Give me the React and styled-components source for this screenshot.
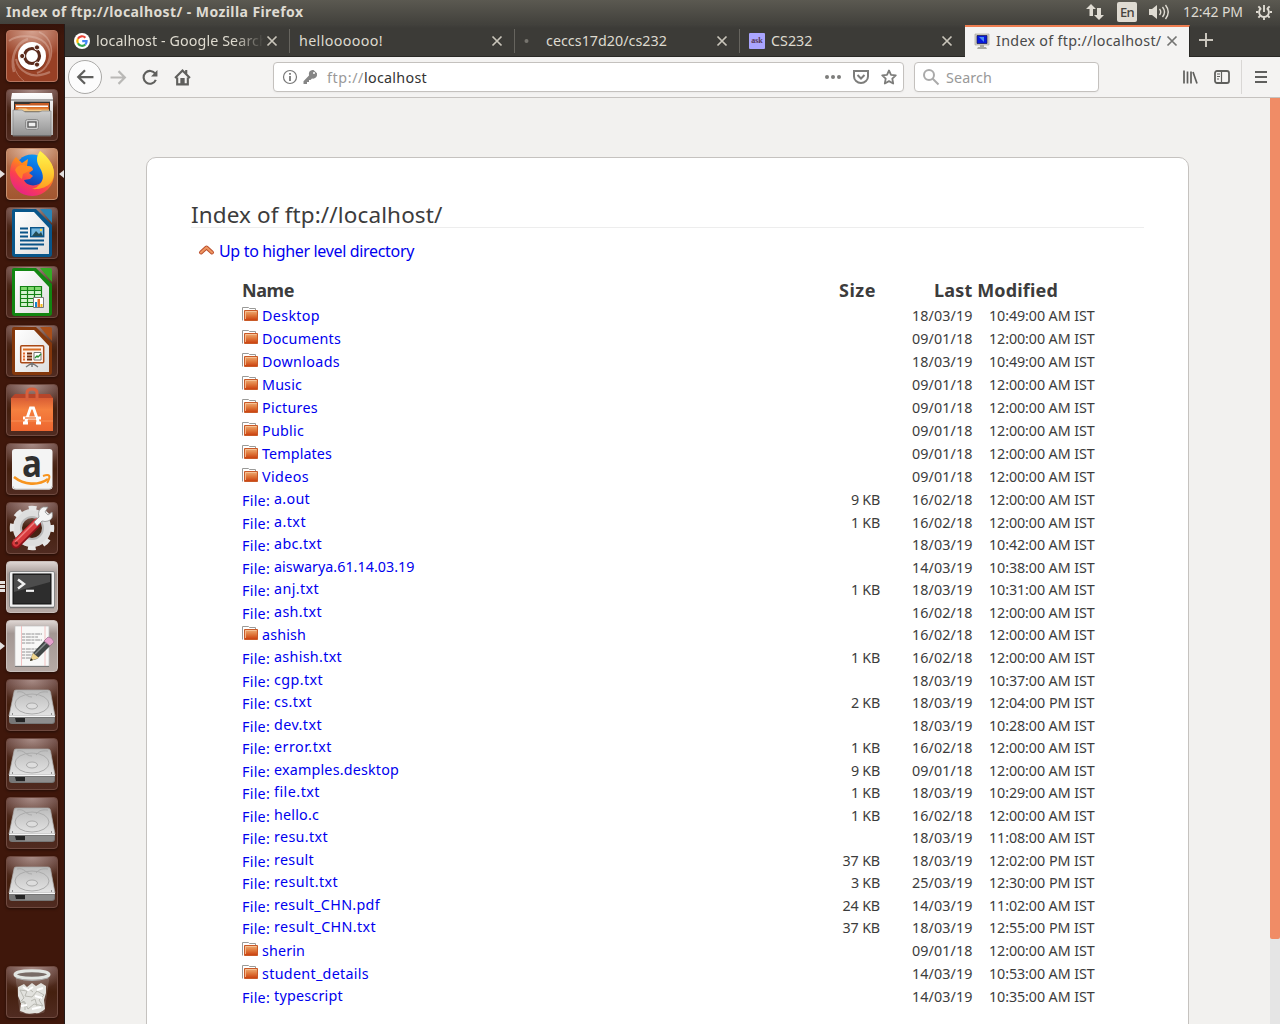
import React, { useLayoutEffect, useRef, useState } from "react";
import styled, { createGlobalStyle } from "styled-components";

const Global = createGlobalStyle`
  html, body { margin: 0; height: 1024px; overflow: hidden; }
  body { font-family: "Noto Sans", "Open Sans", sans-serif; color: #3c3c3c; background: #f2f1f0; }
  * { box-sizing: border-box; }
  svg { display: block; flex: none; overflow: visible; }
`;

const FitSpan = styled.span`
  display: inline-block;
  white-space: pre;
  flex: none;
  justify-self: start;
`;

/* Tracks text so that it fills the given advance width. */
function Fit({ w, children }) {
  const ref = useRef(null);
  const [spacing, setSpacing] = useState(0);
  useLayoutEffect(() => {
    const natural = ref.current.getBoundingClientRect().width;
    setSpacing((w - natural) / children.length);
  }, [w, children]);
  return (
    <FitSpan ref={ref} style={{ letterSpacing: spacing + "px" }}>
      {children}
    </FitSpan>
  );
}

const Desktop = styled.div`
  width: 1280px;
  height: 1024px;
  display: flex;
  flex-direction: column;
  overflow: hidden;
`;

/* ---------- top panel ---------- */
const Panel = styled.header`
  height: 24px;
  flex: none;
  display: flex;
  align-items: center;
  padding: 0 8px 0 6px;
  background: linear-gradient(#5b5951, #42413c);
  color: #dfdbd2;
  font-size: 14.5px;
  line-height: 24px;
`;
const PanelTitle = styled.div`
  flex: 1;
  font-weight: 700;
  font-size: 14px;
`;
const Indicators = styled.div`
  display: flex;
  align-items: center;
`;
const Language = styled.div`
  width: 20px;
  height: 20px;
  margin: 0 12px 0 13px;
  border-radius: 2px;
  background: #dfdbd2;
  color: #45433e;
  font-size: 13px;
  line-height: 20px;
  font-weight: 500;
  text-align: center;
  display: flex;
  justify-content: center;
`;
const Clock = styled.div`
  margin: 0 13px 0 13px;
  font-size: 14px;
`;

const Body = styled.div`
  flex: 1;
  display: flex;
  min-height: 0;
`;

/* ---------- launcher ---------- */
const Launcher = styled.nav`
  width: 65px;
  flex: none;
  display: flex;
  flex-direction: column;
  gap: 7px;
  padding: 6px 0 6px 6px;
  background: linear-gradient(#35130a, #3f170b 12px, #3f170b);
  border-right: 1px solid #241b1a;
`;
const Tile = styled.div`
  position: relative;
  width: 52px;
  height: 52px;
  flex: none;
  border-radius: 4px;
  border: 1px solid ${(p) => p.$edge || "#6f4a40"};
  background: ${(p) => p.$bg || "radial-gradient(ellipse 34px 24px at 50% 0, rgba(235,215,210,.5), transparent), linear-gradient(#64403a, #45200f 50%, #502b21)"};
  box-shadow: 0 1px 3px rgba(0, 0, 0, 0.45);
  margin-top: ${(p) => (p.$last ? "auto" : "0")};
  svg { margin: -1px; }
`;
const Marker = styled.i`
  position: absolute;
  top: 21px;
  ${(p) => (p.$right ? "right: -7px; border-right: 5px solid #e4e0df;" : "left: -7px; border-left: 5px solid #e4e0df;")}
  border-top: 4px solid transparent;
  border-bottom: 4px solid transparent;
`;
const Pips = styled.i`
  position: absolute;
  top: 19px;
  left: -7px;
  width: 5px;
  height: 11px;
  background: repeating-linear-gradient(#e4e0df 0 3px, transparent 3px 4px);
`;

const I52 = ({ children }) => (
  <svg width="52" height="52" viewBox="0 0 52 52">{children}</svg>
);

const Dash = () => (
  <I52>
    <g fill="none" stroke="#e7c6b9" opacity=".4">
      <path d="M3 11C13 3 36 5 42 17C47 27 41 40 31 43" strokeWidth="2" />
      <path d="M8 42C4 27 10 13 22 9" strokeWidth="2.5" />
      <path d="M10 29C12 40 25 51 44 42" strokeWidth="2" />
      <path d="M33 2C47 8 48 24 42 34" strokeWidth="1.5" />
      <path d="M18 51C8 44 5 30 10 20" strokeWidth="1" />
    </g>
    <circle cx="26" cy="27" r="14" fill="#5b2210" opacity=".5" />
    <circle cx="26" cy="26" r="14" fill="#fff" />
    <circle cx="26" cy="26" r="7.5" fill="none" stroke="#5a2a1b" strokeWidth="3.2" />
    <g fill="#5a2a1b" stroke="#fff" strokeWidth="1"><circle cx="16.2" cy="26" r="2.6" /><circle cx="31" cy="17.4" r="2.6" /><circle cx="31" cy="34.6" r="2.6" /></g>
  </I52>
);

const Files = () => (
  <I52>
    <defs>
      <linearGradient id="cab" x2="0" y2="1"><stop stopColor="#cfcfcf" /><stop offset="1" stopColor="#929292" /></linearGradient>
      <linearGradient id="cabt" x2="0" y2="1"><stop stopColor="#fff" /><stop offset="1" stopColor="#b5b5b5" /></linearGradient>
    </defs>
    <path d="M6 4h40l1 6v36H5V10z" fill="url(#cabt)" />
    <path d="M5 10h42v2H5z" fill="#aaa" />
    <path d="M8 12.500h36V23H8z" fill="#343331" />
    <path d="M9 15h14l2-1h18v8H9z" fill="#c75c24" /><path d="M10 16.500h32V18H10z" fill="#fff" />
    <path d="M10 18.500h32v2H10z" fill="#e98030" /><path d="M13 19.500h7l2 1h21v2H10z" fill="#f1ca8c" />
    <path d="M7 21h9l3 2h14l3-1h9v25H7z" fill="url(#cab)" stroke="#858585" strokeWidth=".7" />
    <path d="M7 46.500h38" stroke="#707070" />
    <rect x="19.5" y="30.5" width="13" height="10" rx="2" fill="#ccc" stroke="#888" />
    <rect x="22" y="33" width="8" height="5" fill="#eee" stroke="#555" strokeWidth="1.300" />
  </I52>
);

const Firefox = () => (
  <I52>
    <defs>
      <linearGradient id="fx" x1=".75" y1=".1" x2=".25" y2="1"><stop stopColor="#ffbd2e" /><stop offset=".35" stopColor="#ff8a1a" /><stop offset=".65" stopColor="#fb4050" /><stop offset="1" stopColor="#e5208c" /></linearGradient>
      <linearGradient id="fxf" x1=".4" y1="0" x2=".4" y2="1"><stop stopColor="#fff44f" /><stop offset=".5" stopColor="#ffd233" /><stop offset="1" stopColor="#ff9d20" /></linearGradient>
      <linearGradient id="fxg" x1=".7" y1="0" x2=".3" y2="1"><stop stopColor="#0b9cf5" /><stop offset=".5" stopColor="#0a65dd" /><stop offset="1" stopColor="#242a90" /></linearGradient>
    </defs>
    <circle cx="26" cy="24" r="17.500" fill="url(#fxg)" />
    <path d="M10 9C5 14 4 20 4 27a22 21.500 0 0 0 44-1C48 17 42 9 34 3c-4 6-3 12 1 17 4 6 3 13-2 16-6 3-13 1-15-4l6-1 3-3-4-3 4-3q0-4-6-4l1-7-6 4z" fill="url(#fx)" />
    <path d="M34 3c-4 6-4 11 0 17 4 7 4 13-1 17-2 2-3 3-7 4 9 1 22-3 22-16C48 17 42 9 34 3z" fill="url(#fxf)" />
    <path d="M9 22q2-5 8-5l9 2-3 4-6 3-1 5q-4-2-7-9z" fill="#ff9020" opacity=".8" />
  </I52>
);

const Doc = ({ c, light, children }) => (
  <I52>
    <defs><linearGradient id={"p" + c.slice(1)} x2="1" y2="1"><stop stopColor="#fff" /><stop offset="1" stopColor="#dedede" /></linearGradient></defs>
    <path d="M8 2h22l16 16v29q0 3-3 3H9q-3 0-3-3V4q0-2 2-2z" fill={c} />
    <path d="M34 2h10q2 0 2 2v12z" fill={light} />
    <path d="M9 5h19l15 16v26H9z" fill={"url(#p" + c.slice(1) + ")"} />
    {children}
  </I52>
);
const Writer = () => (
  <Doc c="#08568a" light="#2b84b6">
    <path d="M14 21.5h8M14 25.5h8M14 29.5h8M14 33.5h24M14 37.5h24M14 41.5h18" stroke="#095387" strokeWidth="2" />
    <rect x="24.7" y="20.7" width="13" height="9" fill="#74b7df" stroke="#095387" strokeWidth="1.4" />
    <path d="M26 29l4-5 3 3 2-2 2 4z" fill="#244c55" /><circle cx="35" cy="23" r="1.2" fill="#ffd042" />
  </Doc>
);
const Calc = () => (
  <Doc c="#128611" light="#35aa25">
    <path d="M14 20h22v21H14z" fill="#d5f3d0" /><path d="M14 20h22v4H14z" fill="#82d96f" />
    <path d="M14.5 20.5h21v20h-21zM14 24.5h22M14 28.5h22M14 32.5h22M14 36.5h22M21.5 20v21M28.5 20v21" fill="none" stroke="#148215" strokeWidth="1.2" />
    <path d="M27.5 31.5h10v10h-10z" fill="#fff" stroke="#777" /><path d="M29 36h2v5h-2z" fill="#1286d1" /><path d="M31.5 33h2.5v8h-2.5z" fill="#e26c20" /><path d="M34.5 38h2v3h-2z" fill="#f3b916" />
  </Doc>
);
const Impress = () => (
  <Doc c="#84370b" light="#a94e18">
    <rect x="14.7" y="20.7" width="23" height="17" rx="1" fill="#fff1e7" stroke="#a94916" strokeWidth="1.5" />
    <path d="M17 24.5h18" stroke="#d86d25" strokeWidth="2" />
    <path d="M17 28.5h2M17 31.5h2M17 34.5h2" stroke="#e4692d" strokeWidth="2" />
    <path d="M21 28.5h5M21 31.5h5M21 34.5h5" stroke="#702d0d" strokeWidth="2" />
    <path d="M28 27.500h7v7.500h-7z" fill="#fff" stroke="#777" /><path d="M29 33l2-2 1 1 3-3" fill="none" stroke="#278e2f" strokeWidth="1.4" />
    <path d="M20 42l6-4 6 4M26 38v4" fill="none" stroke="#777" strokeWidth="1.5" />
  </Doc>
);
const Software = () => (
  <I52>
    <defs><linearGradient id="bag" x2="0" y2="1"><stop stopColor="#d95d34" /><stop offset=".35" stopColor="#f5803f" /><stop offset="1" stopColor="#ed6630" /></linearGradient></defs>
    <path d="M5 14l4-4h35l3 4z" fill="#b6452a" /><path d="M5 14h42v33H5z" fill="url(#bag)" />
    <path d="M21 17V9q0-4 5-4t5 4v8" fill="none" stroke="#d9603d" strokeWidth="3" />
    <path d="M5 37h42" stroke="#ffa46d" opacity=".6" />
    <path d="M19 40l5.500-16h3L33 40M17 34h18M17 39h5M30 39h5" fill="none" stroke="#fff" strokeWidth="2.800" />
    <path d="M19 34h11" stroke="#f27635" strokeWidth="1.300" />
  </I52>
);
const Amazon = () => (
  <I52>
    <rect x="6" y="6" width="40.500" height="40.500" rx="3" fill="#f4f4f4" />
    <path d="M7 43q0 3 3 3h33q3 0 3-3" fill="none" stroke="#ccc" />
    <text x="26" y="33.500" textAnchor="middle" fontFamily="Open Sans" fontWeight="700" fontSize="37" textLength="20" lengthAdjust="spacingAndGlyphs" fill="#303030">a</text>
    <path d="M8 34c10 8 24 9 34 2" fill="none" stroke="#f7941e" strokeWidth="2.7" />
    <path d="M37 33q8-3 6 3-1 3-2 4" fill="none" stroke="#f7941e" strokeWidth="2" />
  </I52>
);
const Settings = () => (
  <I52>
    <circle cx="26" cy="26" r="15" fill="none" stroke="#dedede" strokeWidth="8" />
    <circle cx="26" cy="26" r="20" fill="none" stroke="#e6e6e6" strokeWidth="4.500" strokeDasharray="7.854 7.854" strokeDashoffset="3.927" />
    <circle cx="26" cy="26" r="11" fill="none" stroke="#b9b9b9" strokeWidth="2" />
    <path d="M10 42L30 22" stroke="#8c111a" strokeWidth="9" strokeLinecap="round" />
    <path d="M10 41L31 20" stroke="#d63b3e" strokeWidth="7" strokeLinecap="round" />
    <path d="M9 40L29 20" stroke="#f18080" strokeWidth="1.500" />
    <path d="M28 20l5-5q-2-7 4-10l5 0-3 5 3 3 4-3q2 7-4 9-3 1-6 0l-5 5z" fill="#f4f4f4" stroke="#929292" strokeWidth=".8" />
    <circle cx="10.500" cy="41" r="1.600" fill="#7b2020" />
  </I52>
);
const Terminal = () => (
  <I52>
    <rect x="3.500" y="10.500" width="45" height="36" rx="1.500" fill="#f0f0f0" stroke="#888" />
    <path d="M4 46.500h44" stroke="#727272" strokeWidth="1.500" />
    <rect x="7" y="13" width="38" height="30" fill="#2d2d2d" stroke="#111" />
    <path d="M8 14h36v7L8 31z" fill="#4c4c4c" />
    <path d="M12 18.500l6 4.500-6 4.500" fill="none" stroke="#f0f0f0" strokeWidth="2.400" /><path d="M20 29.800h8" stroke="#f0f0f0" strokeWidth="2.200" />
  </I52>
);
const Editor = () => (
  <I52>
    <path d="M9 6h34v40H9z" fill="#f8f8f7" stroke="#bebebe" strokeWidth=".7" /><path d="M9 46.500h34" stroke="#777" />
    <path d="M15.500 6v40M39 6v40" stroke="#efb4b4" strokeWidth=".8" />
    <path d="M16 14h20M16 17h16M16 20h20M16 23h13M16 29h19M16 32h15M16 35h17M16 38h14" stroke="#888" strokeWidth=".9" strokeDasharray="3 .8 5 .6" />
    <path d="M24 41l3-8 13-14 6 5-15 15z" fill="#424746" /><path d="M24 41l3-8 6 5z" fill="#efd58d" /><path d="M24 41l1-3 2 2z" fill="#222" />
    <path d="M29 34l13-13" stroke="#868b8b" strokeWidth="1.500" />
    <path d="M38 21l4-4q4 0 6 5l-4 4z" fill="#e6a1cd" stroke="#99718b" strokeWidth=".7" />
  </I52>
);
const Drive = () => (
  <I52>
    <defs><linearGradient id="hd" x2="0" y2="1"><stop stopColor="#bbb" /><stop offset="1" stopColor="#e4e4e4" /></linearGradient></defs>
    <path d="M10 11h32q2 0 2.500 2L49 37H3L8 13q0-2 2-2z" fill="url(#hd)" stroke="#aaa" strokeWidth=".7" />
    <path d="M3 37h46v5q0 3-3 3H6q-3 0-3-3z" fill="#777" /><path d="M3 37.500h46" stroke="#f7f7f7" />
    <path d="M9 39h10v4H10z" fill="#242424" /><path d="M19 39h29v3q0 2-2 2H19z" fill="#8e8e8e" />
    <ellipse cx="26" cy="25" rx="17" ry="10" fill="none" stroke="#acacac" />
    <ellipse cx="26" cy="27" rx="5.500" ry="3" fill="#ddd" stroke="#aaa" />
    <path d="M11 13c8-2 8 5 15 5M42 13c-8-1-10 2-12 4" fill="none" stroke="#aaa" />
    <path d="M6 35h1M45 35h1" stroke="#777" strokeWidth="1.500" />
  </I52>
);
const Trash = () => (
  <I52>
    <path d="M10 10h33l-5 36q-12 4-24 0z" fill="#c9c0bb" opacity=".2" stroke="#ccc" />
    <path d="M12 21l6-3 3 3 5-4 4 3 5-3 5 3v7l-2 7 1 9q-5 5-10 4-8 2-12-1l-3-1 1-8-3-7z" fill="#e2e2de" />
    <path d="M14 24l7 1-2 5 7 1 5-6 7 4-5 5 4 6-9-2-6 5-3-6-5-1 4-4zM22 22l5 4M25 35l4-2 2 7M16 35l3 1v8" fill="none" stroke="#b8b8b1" />
    <path d="M17 21l5 3 5-3M31 24l6-2M29 30l7 2M15 40l6-1M26 43l9-2" stroke="#fff" strokeWidth="2" fill="none" />
    <ellipse cx="26" cy="8.500" rx="17" ry="3.800" fill="#786b66" stroke="#e2e5e2" strokeWidth="3" />
    <path d="M10 12q16 5 32 0" fill="none" stroke="#aaa" />
  </I52>
);

const cream = "linear-gradient(#ddd5d2, #a39793 25%, #b6aaa5)";
const tiles = [
  { I: Dash, bg: "radial-gradient(ellipse 40px 28px at 50% 0, rgba(240,205,190,.7), transparent), #984025", edge: "#b9765f" },
  { I: Files },
  { I: Firefox, bg: "radial-gradient(ellipse 34px 24px at 50% 0, rgba(255,235,220,.65), transparent), linear-gradient(#b5714c, #a25630)", edge: "#c7906f", left: true, right: true },
  { I: Writer }, { I: Calc }, { I: Impress }, { I: Software }, { I: Amazon }, { I: Settings },
  { I: Terminal, bg: cream, edge: "#c9bfbb", pips: true },
  { I: Editor, bg: cream, edge: "#c9bfbb", left: true },
  { I: Drive }, { I: Drive }, { I: Drive }, { I: Drive },
  { I: Trash, last: true },
];

/* ---------- browser ---------- */
const Browser = styled.main`
  flex: 1;
  min-width: 0;
  display: flex;
  flex-direction: column;
`;
const TabStrip = styled.div`
  height: 33px;
  flex: none;
  display: flex;
  background: linear-gradient(#43423d, #3c3b37 4px);
  box-shadow: inset 0 -1px #292825;
`;
const Tab = styled.div`
  width: 225px;
  display: flex;
  align-items: center;
  padding: ${(p) => (p.$active ? "0 9px 3px 9px" : "0 10px 0 9px")};
  font-size: 14.3px;
  line-height: 20px;
  color: ${(p) => (p.$active ? "#4a4a4a" : "#dedacf")};
  background: ${(p) => (p.$active ? "#f4f3f2" : `linear-gradient(#66645e, #66645e) right 0 top 5px / ${p.$rule ? 1 : 0}px 24px no-repeat`)};
  border-top: ${(p) => (p.$active ? "2px solid #ee7d50" : "0")};
  margin-top: ${(p) => (p.$active ? "1px" : "0")};
  border-right: ${(p) => (p.$active ? "1px solid #292825" : "0")};
`;
const Fav = styled.div`
  width: 16px;
  height: 16px;
  flex: none;
  margin-right: 6px;
`;
const TabLabel = styled.div`
  flex: 1;
  min-width: 0;
  overflow: hidden;
  ${(p) => p.$fade && "mask-image: linear-gradient(90deg, #000 138px, transparent 168px);"}
`;
const AskIcon = styled.div`
  width: 16px;
  height: 16px;
  background: #aaa5ff;
  color: #543653;
  font: 700 8px/15px "Liberation Serif", serif;
  text-align: center;
  border-radius: 1px;
`;
const NewTab = styled.div`
  display: flex;
  align-items: center;
  padding: 0 0 1px 8px;
`;
const Toolbar = styled.div`
  height: 41px;
  flex: none;
  display: flex;
  align-items: center;
  padding-left: 3px;
  background: #f4f3f2;
  border-bottom: 1px solid #c5c2bf;
`;
const BackButton = styled.div`
  width: 34px;
  height: 34px;
  flex: none;
  border-radius: 50%;
  border: 1px solid #aaa9a7;
  background: #fcfcfc;
  display: flex;
  align-items: center;
  justify-content: center;
`;
const NavIcons = styled.div`
  display: flex;
  align-items: center;
  gap: 15px;
  width: 171px;
  padding-left: 8px;
`;
const Field = styled.div`
  width: ${(p) => p.$w}px;
  height: 30px;
  flex: none;
  display: flex;
  align-items: center;
  padding: 0 6px 0 8px;
  margin-right: ${(p) => p.$mr}px;
  background: #fff;
  border: 1px solid #c4c1be;
  border-radius: 4px;
  font-size: 14.3px;
  line-height: 20px;
  color: #333;
  box-shadow: 0 1px 2px rgba(0,0,0,.04);
`;
const Muted = styled.span`color: #999;`;
const UrlText = styled.div`
  flex: 1;
  display: flex;
  padding-top: 1px;
  margin-left: ${(p) => p.$ml}px;
`;
const KeyIcon = styled.svg`
  margin-left: 4px;
`;
const FieldIcons = styled.div`
  display: flex;
  gap: 12px;
`;
const MenuIcons = styled.div`
  display: flex;
  align-items: center;
  gap: 16px;
`;
const MenuRule = styled.div`
  width: 1px;
  height: 34px;
  margin: 0 -4px 0 -5px;
  background: #d9d7d5;
`;

const Icon16 = ({ children, s = "#5f5f5d", w = 2, size = 16 }) => (
  <svg width={size} height={size} viewBox="0 0 16 16" fill="none" stroke={s} strokeWidth={w}>{children}</svg>
);
const Close = ({ s = "#c9c5ba" }) => (
  <Icon16 s={s} w={1.700}><path d="M3.500 3.500l9 9M12.500 3.500l-9 9" /></Icon16>
);

const Google = () => (
  <svg width="16" height="16" viewBox="0 0 16 16">
    <circle cx="8" cy="8" r="8" fill="#fff" />
    <g fill="none" strokeWidth="2.200">
      <path d="M11.400 4.700A4.700 4.700 0 0 0 3.900 5.700" stroke="#ea4335" /><path d="M3.900 5.700a4.700 4.700 0 0 0 0 4.600" stroke="#fbbc05" />
      <path d="M3.900 10.300a4.700 4.700 0 0 0 7.400 1.200" stroke="#34a853" /><path d="M11.300 11.500c1-1 1.400-2 1.300-3.400H8.200" stroke="#4285f4" />
    </g>
  </svg>
);
const Computer = () => (
  <svg width="16" height="16" viewBox="0 0 16 16">
    <path d="M1 1h14v11H1z" fill="#d5d3c9" stroke="#aaa79d" strokeWidth=".7" /><path d="M3 2.500h10v8H3z" fill="#0719db" stroke="#17194a" strokeWidth=".7" />
    <path d="M5 4l5 5V4z" fill="#4b8bef" /><path d="M6 12h4v2h2l1 2H3l1-2h2z" fill="#aaa9a0" />
  </svg>
);

/* ---------- page ---------- */
const Viewport = styled.div`
  flex: 1;
  min-height: 0;
  display: flex;
  overflow: hidden;
`;
const Page = styled.div`
  flex: 1;
  background: #f2f1ef;
  padding: 59px 81px 0;
`;
const Card = styled.section`
  height: 900px;
  padding: 43px 44px 0;
  background: #fff;
  border: 1px solid #c5c2bf;
  border-radius: 10px;
`;
const Heading = styled.h1`
  margin: 0;
  height: 27px;
  font-size: 22.5px;
  font-weight: 400;
  line-height: 28px;
  border-bottom: 1px solid #ededed;
`;
const UpLink = styled.a`
  height: 24px;
  margin: 11px 0 15px 7px;
  display: flex;
  align-items: center;
  gap: 4px;
  font-size: 16px;
  line-height: 24px;
  color: #0000ee;
`;
const Listing = styled.div`
  margin-left: 51px;
  font-size: 14.3px;
`;
const Row = styled.div`
  display: grid;
  grid-template-columns: 560px 79px 31px 77px 110px;
  align-items: center;
  height: ${(p) => (p.$folder ? 23 : 22.5)}px;
  line-height: 22px;
`;
const HeadRow = styled.div`
  height: 26.75px;
  display: grid;
  grid-template-columns: 597px 95px 200px;
  align-items: start;
  font-size: 18px;
  font-weight: 700;
  line-height: 25px;
`;
const Name = styled.a`
  display: flex;
  gap: 4px;
  color: #0000ee;
`;
const FileMark = styled.span`padding-top: 1px; height: 22px;`;
const FileName = styled.span`margin-top: ${(p) => (p.$folder ? 0 : -1)}px;`;
const FolderBox = styled.span`padding-top: 2px;`;
const Size = styled.div`text-align: right; margin-right: 1px; color: #3c3c3c;`;
const Cell = styled.div`color: #3c3c3c;`;
const Scrollbar = styled.div`
  width: 10px;
  flex: none;
  background: #e5e5e5;
`;
const Thumb = styled.div`
  height: 841px;
  background: #f08c66;
  border-radius: 0 0 2px 2px;
`;

const Folder = () => (
  <svg width="16" height="15" viewBox="0 0 16 15">
    <defs><linearGradient id="fold" x2="0" y2="1"><stop stopColor="#efb078" /><stop offset=".5" stopColor="#df773a" /><stop offset="1" stopColor="#c93d0c" /></linearGradient></defs>
    <path d="M.5 13.500V.5h6l1 1h6v2" fill="#fff" stroke="#9a9a98" />
    <path d="M2.500 3.500h13v10h-13z" fill="url(#fold)" stroke="#c95a28" /><path d="M3.500 12V4.500h11" fill="none" stroke="#f6c79e" opacity=".8" />
  </svg>
);

const M = "12:00:00 AM IST";
const rows = [
  ["Desktop", 58, "", "18/03/19", "10:49:00 AM IST", 1], ["Documents", 79, "", "09/01/18", M, 1],
  ["Downloads", 78, "", "18/03/19", "10:49:00 AM IST", 1], ["Music", 40, "", "09/01/18", M, 1],
  ["Pictures", 56, "", "09/01/18", M, 1], ["Public", 42, "", "09/01/18", M, 1],
  ["Templates", 70, "", "09/01/18", M, 1], ["Videos", 47, "", "09/01/18", M, 1],
  ["a.out", 36, "9 KB", "16/02/18", M], ["a.txt", 32, "1 KB", "16/02/18", M],
  ["abc.txt", 48, "", "18/03/19", "10:42:00 AM IST"], ["aiswarya.61.14.03.19", 140.5, "", "14/03/19", "10:38:00 AM IST"],
  ["anj.txt", 45, "1 KB", "18/03/19", "10:31:00 AM IST"], ["ash.txt", 48, "", "16/02/18", M],
  ["ashish", 44, "", "16/02/18", M, 1], ["ashish.txt", 68, "1 KB", "16/02/18", M],
  ["cgp.txt", 49, "", "18/03/19", "10:37:00 AM IST"], ["cs.txt", 38, "2 KB", "18/03/19", "12:04:00 PM IST"],
  ["dev.txt", 48, "", "18/03/19", "10:28:00 AM IST"], ["error.txt", 58, "1 KB", "16/02/18", M],
  ["examples.desktop", 125, "9 KB", "09/01/18", M], ["file.txt", 46, "1 KB", "18/03/19", "10:29:00 AM IST"],
  ["hello.c", 45, "1 KB", "16/02/18", M], ["resu.txt", 54, "", "18/03/19", "11:08:00 AM IST"],
  ["result", 40, "37 KB", "18/03/19", "12:02:00 PM IST"], ["result.txt", 64, "3 KB", "25/03/19", "12:30:00 PM IST"],
  ["result_CHN.pdf", 106, "24 KB", "14/03/19", "11:02:00 AM IST"], ["result_CHN.txt", 102, "37 KB", "18/03/19", "12:55:00 PM IST"],
  ["sherin", 43, "", "09/01/18", M, 1], ["student_details", 107, "", "14/03/19", "10:53:00 AM IST", 1],
  ["typescript", 69, "", "14/03/19", "10:35:00 AM IST"],
];

export default function App() {
  return (
    <Desktop>
      <Global />
      <Panel>
        <PanelTitle><Fit w={297.5}>Index of ftp://localhost/ - Mozilla Firefox</Fit></PanelTitle>
        <Indicators>
          <svg width="18" height="18" viewBox="0 0 18 18" fill="#dfdbd2"><path d="M5 1L0 6h3.500v7h3.500V6h3zM13 17l-5-5h3V5h4v7h3z" /></svg>
          <Language><Fit w={14}>En</Fit></Language>
          <svg width="21" height="18" viewBox="0 0 21 18" fill="#dfdbd2"><path d="M0 6h3l5-4v14l-5-4H0z" /><path d="M10.500 6q2.500 3 0 6M13.500 4q4 5 0 10M16.500 2q5.500 7 0 14" fill="none" stroke="#dfdbd2" strokeWidth="1.400" /></svg>
          <Clock><Fit w={60}>12:42 PM</Fit></Clock>
          <svg width="16" height="16" viewBox="0 0 17 17" fill="none" stroke="#dfdbd2"><path d="M5.500 4.400a5.200 5.200 0 1 0 6 0" strokeWidth="2" /><path d="M8.500 1v7.500M0 8.500h2.500M14.500 8.500H17M8.500 14.500V17M2.500 14.500l2-2M14.500 14.500l-2-2M2.500 2.500l2 2M14.500 2.500l-2 2" strokeWidth="2" /></svg>
        </Indicators>
      </Panel>
      <Body>
        <Launcher>
          {tiles.map((t, i) => (
            <Tile key={i} $bg={t.bg} $edge={t.edge} $last={t.last}>
              <t.I />
              {t.left && <Marker />}
              {t.right && <Marker $right />}
              {t.pips && <Pips />}
            </Tile>
          ))}
        </Launcher>
        <Browser>
          <TabStrip>
            <Tab $rule><Fav><Google /></Fav><TabLabel $fade><Fit w={172}>localhost - Google Search</Fit></TabLabel><Close /></Tab>
            <Tab $rule><TabLabel><Fit w={84}>helloooooo!</Fit></TabLabel><Close /></Tab>
            <Tab $rule>
              <Fav><svg width="16" height="16"><circle cx="2.500" cy="8" r="2" fill="#77756f" /></svg></Fav>
              <TabLabel><Fit w={121}>ceccs17d20/cs232</Fit></TabLabel><Close />
            </Tab>
            <Tab><Fav><AskIcon>ask</AskIcon></Fav><TabLabel><Fit w={41.5}>CS232</Fit></TabLabel><Close /></Tab>
            <Tab $active><Fav><Computer /></Fav><TabLabel><Fit w={165.5}>Index of ftp://localhost/</Fit></TabLabel><Close s="#747472" /></Tab>
            <NewTab><svg width="16" height="16" stroke="#cac6bd" strokeWidth="2"><path d="M8 1v14M1 8h14" /></svg></NewTab>
          </TabStrip>
          <Toolbar>
            <BackButton><Icon16 size={18}><path d="M15.500 8H2M8 2L2 8l6 6" /></Icon16></BackButton>
            <NavIcons>
              <Icon16 s="#b9b8b6" size={17}><path d="M.5 8H14M8 2l6 6-6 6" /></Icon16>
              <Icon16 size={17}><path d="M13 10.200A6 6 0 1 1 12.500 4.500" /><path d="M14.500 1v6h-6z" fill="#5f5f5d" stroke="none" /></Icon16>
              <Icon16 size={17}><path d="M1 8.500l7-7 7 7M3 8v6.500h10V8M11.500 1v4" /><path d="M6.500 14V9h3v5z" fill="#5f5f5d" strokeWidth="1" /></Icon16>
            </NavIcons>
            <Field $w={631} $mr={10}>
              <Icon16 s="#777" w={1.200}><circle cx="8" cy="8" r="6.500" /><path d="M8 7v5M8 4v1.700" strokeWidth="1.800" /></Icon16>
              <KeyIcon width="16" height="16" viewBox="0 0 16 16"><path d="M7.500 2.500Q9 .5 11.500 1L15 4.300q.5 2.600-1.200 4.200-1.500 1.500-3.800 1L8.500 11H7v2H5v2H1.500v-2.800L7 6.500q-.5-2.500.5-4z" fill="#858585" /><circle cx="12" cy="4" r="1" fill="#fff" /></KeyIcon>
              <UrlText $ml={9}><Muted><Fit w={37}>ftp://</Fit></Muted><Fit w={63}>localhost</Fit></UrlText>
              <FieldIcons>
                <svg width="16" height="16" fill="#7d7d7b"><circle cx="2" cy="8" r="2" /><circle cx="8" cy="8" r="2" /><circle cx="14" cy="8" r="2" /></svg>
                <Icon16 s="#7d7d7b"><path d="M1 2h14v5.500a7 6.500 0 0 1-14 0z" /><path d="M4.500 6L8 9.500 11.500 6" /></Icon16>
                <Icon16 s="#7d7d7b" w={1.800}><path d="M8 1.500l2 4.300 4.800.5-3.500 3.300.9 4.900L8 12.100l-4.200 2.400.9-4.900-3.500-3.300 4.800-.5z" strokeLinejoin="round" /></Icon16>
              </FieldIcons>
            </Field>
            <Field $w={185} $mr={83}>
              <Icon16 s="#aaa"><circle cx="6" cy="6" r="5" /><path d="M9.500 9.500l6 6" /></Icon16>
              <UrlText $ml={7}><Muted><Fit w={46}>Search</Fit></Muted></UrlText>
            </Field>
            <MenuIcons>
              <Icon16><path d="M2 1.500v13M5.500 2.500v12M9 2.500v12M11 3l4 11.500" strokeWidth="1.700" /></Icon16>
              <Icon16 w={1.800}><rect x="1" y="2" width="14" height="12" rx="2" /><path d="M7.500 2v12M3 5h3M3 7.500h3M3 10h2" strokeWidth="1.200" /></Icon16>
              <MenuRule />
              <svg width="14" height="16" stroke="#5f5f5d" strokeWidth="2"><path d="M1 3h12M1 8h12M1 13h12" /></svg>
            </MenuIcons>
          </Toolbar>
          <Viewport>
            <Page>
              <Card>
                <Heading><Fit w={251.5}>Index of ftp://localhost/</Fit></Heading>
                <UpLink>
                  <svg width="17" height="16" viewBox="0 0 17 16" fill="none"><path d="M3 9.500L8.500 4.500l5.500 5" stroke="#b94c2b" strokeWidth="4" strokeLinecap="round" strokeLinejoin="round" /><path d="M3 9.500L8.500 4.500l5.500 5" stroke="#ed9661" strokeWidth="2.200" strokeLinecap="round" strokeLinejoin="round" /></svg>
                  <Fit w={195}>Up to higher level directory</Fit>
                </UpLink>
                <Listing>
                  <HeadRow><Fit w={52}>Name</Fit><Fit w={37}>Size</Fit><Fit w={124}>Last Modified</Fit></HeadRow>
                  {rows.map(([name, w, size, date, time, folder]) => (
                    <Row key={name} $folder={folder}>
                      <Name>
                        {folder ? <FolderBox><Folder /></FolderBox> : <FileMark><Fit w={28}>File:</Fit></FileMark>}
                        <FileName $folder={folder}><Fit w={w}>{name}</Fit></FileName>
                      </Name>
                      <Size>{size && <Fit w={size.length > 4 ? 37.5 : 29}>{size}</Fit>}</Size>
                      <span />
                      <Cell><Fit w={60.5}>{date}</Fit></Cell>
                      <Cell><Fit w={105.5}>{time}</Fit></Cell>
                    </Row>
                  ))}
                </Listing>
              </Card>
            </Page>
            <Scrollbar><Thumb /></Scrollbar>
          </Viewport>
        </Browser>
      </Body>
    </Desktop>
  );
}
